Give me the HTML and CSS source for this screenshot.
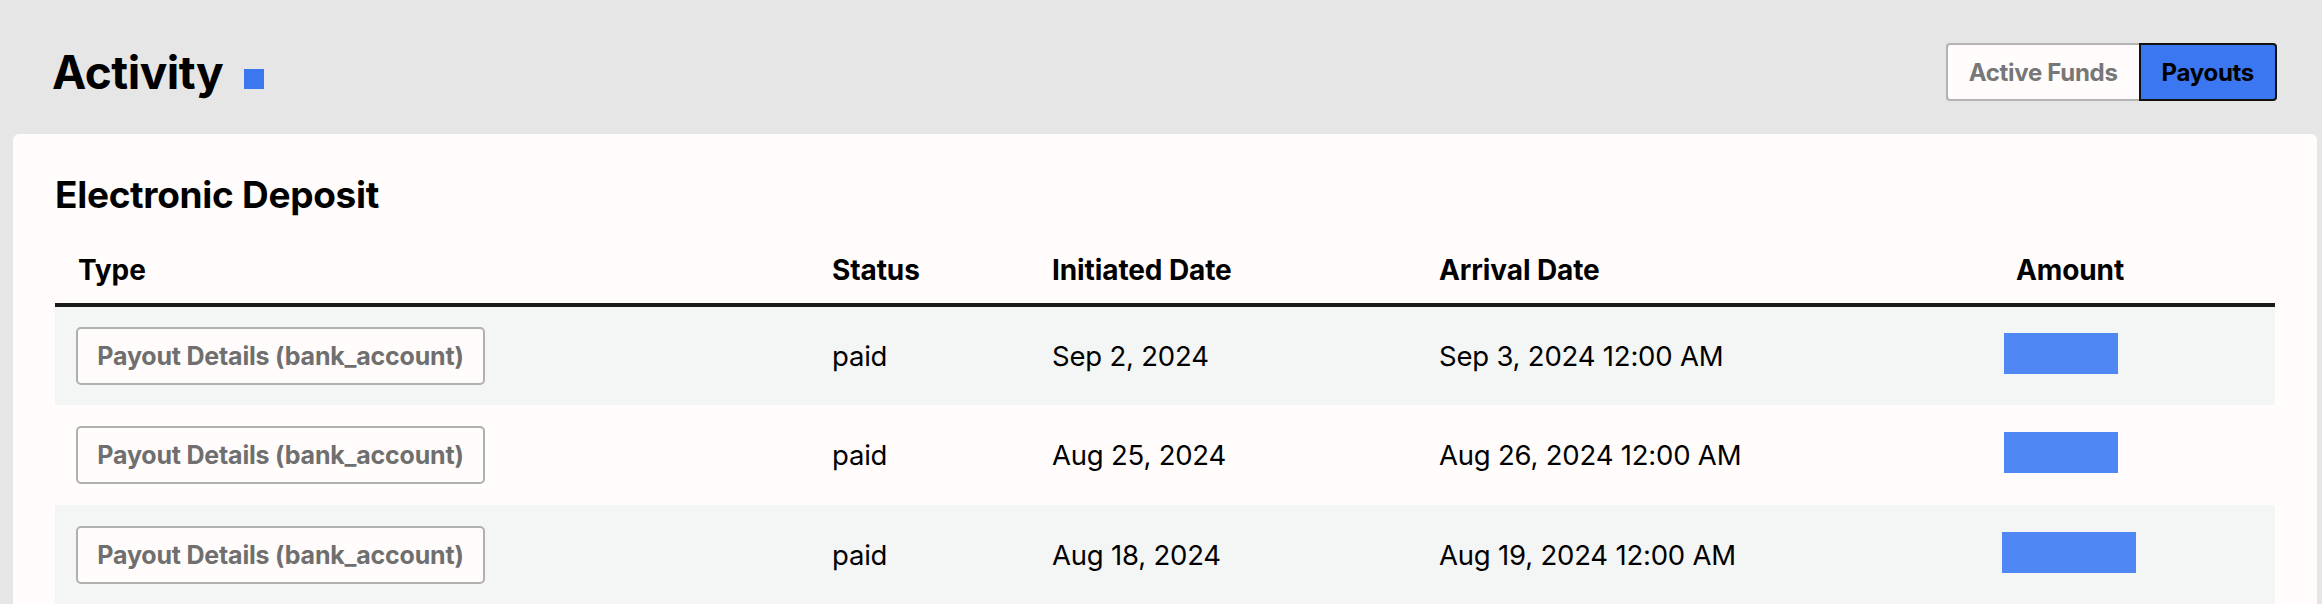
FILE: index.html
```html
<!DOCTYPE html>
<html lang="en">
<head>
<meta charset="utf-8">
<title>Activity</title>
<link rel="stylesheet" href="styles.css">
</head>
<body>
<header class="top">
  <h1 class="title">Activity <span class="title-mark"></span></h1>
  <div class="toggle">
    <button class="toggle-btn">Active Funds</button>
    <button class="toggle-btn toggle-btn--active">Payouts</button>
  </div>
</header>
<main class="card">
  <h2 class="card-title">Electronic Deposit</h2>
  <table class="table">
    <colgroup>
      <col class="col-type">
      <col class="col-status">
      <col class="col-init">
      <col class="col-arrival">
      <col class="col-amount">
    </colgroup>
    <thead>
      <tr>
        <th>Type</th>
        <th>Status</th>
        <th>Initiated Date</th>
        <th>Arrival Date</th>
        <th class="amount">Amount</th>
      </tr>
    </thead>
    <tbody>
      <tr>
        <td><button class="detail-btn">Payout Details (bank_account)</button></td>
        <td>paid</td>
        <td>Sep 2, 2024</td>
        <td>Sep 3, 2024 12:00 AM</td>
        <td class="amount"><span class="redacted redacted--sm"></span></td>
      </tr>
      <tr>
        <td><button class="detail-btn">Payout Details (bank_account)</button></td>
        <td>paid</td>
        <td>Aug 25, 2024</td>
        <td>Aug 26, 2024 12:00 AM</td>
        <td class="amount"><span class="redacted redacted--sm"></span></td>
      </tr>
      <tr>
        <td><button class="detail-btn">Payout Details (bank_account)</button></td>
        <td>paid</td>
        <td>Aug 18, 2024</td>
        <td>Aug 19, 2024 12:00 AM</td>
        <td class="amount"><span class="redacted redacted--lg"></span></td>
      </tr>
    </tbody>
  </table>
</main>
</body>
</html>
```

FILE: styles.css
```css
* { box-sizing: border-box; }

html, body {
  margin: 0;
  padding: 0;
}

body {
  background: #e6e6e6;
  font-family: Inter, "Liberation Sans", sans-serif;
  color: #000;
  overflow: hidden;
}

.top {
  display: flex;
  justify-content: space-between;
  align-items: center;
  padding: 43px 45px 0 52px;
}

.title {
  margin: 0;
  font-size: 46px;
  font-weight: 700;
  line-height: 58px;
  letter-spacing: -0.5px;
  display: flex;
  align-items: center;
}

.title-mark {
  display: inline-block;
  width: 20px;
  height: 20px;
  background: #3b78f0;
  margin-left: 21px;
  margin-top: 14px;
}

.toggle {
  display: flex;
}

.toggle-btn {
  font-family: inherit;
  font-size: 24px;
  font-weight: 700;
  height: 58px;
  padding: 0 21px;
  background: #fffcfb;
  color: #777;
  border: 2px solid #b3b3b3;
  border-right: none;
  border-radius: 4px 0 0 4px;
  letter-spacing: -0.3px;
}

.toggle-btn--active {
  background: #3b77f0;
  color: #000;
  border: 2px solid #111;
  border-radius: 0 4px 4px 0;
}

.card {
  margin: 33px 5px 0 13px;
  padding: 0 42px;
  background: #fffcfb;
  border-radius: 6px 6px 0 0;
  min-height: 500px;
}

.card-title {
  margin: 0;
  padding-top: 40px;
  font-size: 37px;
  font-weight: 700;
  line-height: 42px;
  letter-spacing: -0.3px;
}

.table {
  width: 100%;
  border-collapse: collapse;
  table-layout: fixed;
  margin-top: 24px;
}

.col-type { width: 754px; }
.col-status { width: 220px; }
.col-init { width: 387px; }
.col-arrival { width: 449px; }

.table th {
  text-align: left;
  font-size: 28px;
  font-weight: 700;
  line-height: 34px;
  padding: 0 0 16px 23px;
  height: 65px;
  vertical-align: bottom;
  border-bottom: 4px solid #1a1a1a;
  letter-spacing: -0.1px;
}

.table td {
  font-size: 27.5px;
  font-weight: 400;
  height: 100px;
  padding: 0 0 0 23px;
  vertical-align: middle;
  letter-spacing: -0.2px;
}

.table tbody tr:nth-child(odd) {
  background: #f4f5f5;
}

.table td:first-child {
  padding-left: 21px;
}

.table .amount {
  text-align: center;
  padding-left: 0;
}

.detail-btn {
  font-family: inherit;
  font-size: 25px;
  font-weight: 700;
  color: #6f6f6f;
  background: #fffcfb;
  border: 2px solid #b0b0b0;
  border-radius: 5px;
  height: 58px;
  width: 409px;
  padding: 0 18px;
  letter-spacing: -0.2px;
}

.redacted {
  display: inline-block;
  height: 41px;
  background: #4f87f5;
  vertical-align: middle;
  margin-bottom: 6px;
}

.redacted--sm { width: 114px; margin-right: 18px; }
.redacted--lg { width: 134px; margin-right: 2px; }
```
